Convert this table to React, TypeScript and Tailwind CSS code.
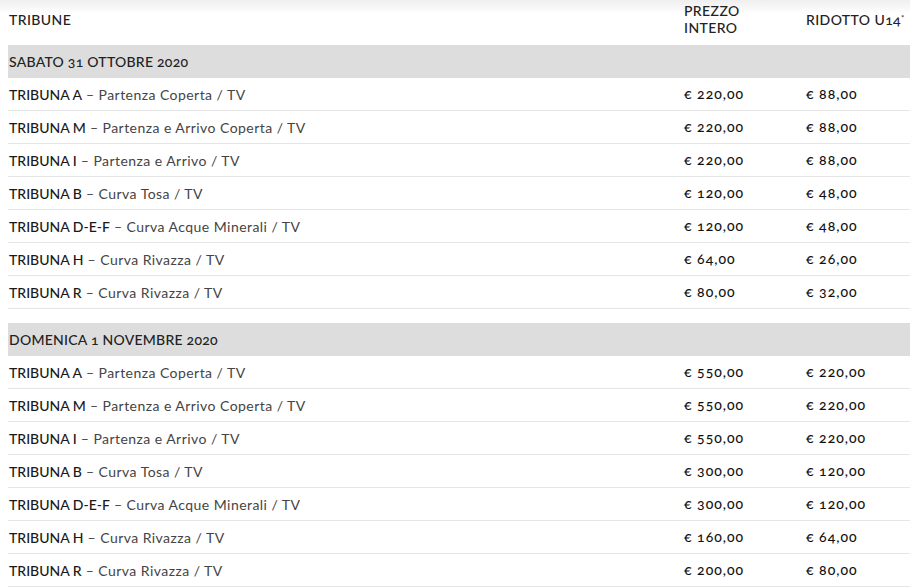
const sections = [
  {
    title: "SABATO 31 OTTOBRE 2020",
    rows: [
      ["TRIBUNA A", "Partenza Coperta / TV", "€ 220,00", "€ 88,00"],
      ["TRIBUNA M", "Partenza e Arrivo Coperta / TV", "€ 220,00", "€ 88,00"],
      ["TRIBUNA I", "Partenza e Arrivo / TV", "€ 220,00", "€ 88,00"],
      ["TRIBUNA B", "Curva Tosa / TV", "€ 120,00", "€ 48,00"],
      ["TRIBUNA D-E-F", "Curva Acque Minerali / TV", "€ 120,00", "€ 48,00"],
      ["TRIBUNA H", "Curva Rivazza / TV", "€ 64,00", "€ 26,00"],
      ["TRIBUNA R", "Curva Rivazza / TV", "€ 80,00", "€ 32,00"],
    ],
  },
  {
    title: "DOMENICA 1 NOVEMBRE 2020",
    rows: [
      ["TRIBUNA A", "Partenza Coperta / TV", "€ 550,00", "€ 220,00"],
      ["TRIBUNA M", "Partenza e Arrivo Coperta / TV", "€ 550,00", "€ 220,00"],
      ["TRIBUNA I", "Partenza e Arrivo / TV", "€ 550,00", "€ 220,00"],
      ["TRIBUNA B", "Curva Tosa / TV", "€ 300,00", "€ 120,00"],
      ["TRIBUNA D-E-F", "Curva Acque Minerali / TV", "€ 300,00", "€ 120,00"],
      ["TRIBUNA H", "Curva Rivazza / TV", "€ 160,00", "€ 64,00"],
      ["TRIBUNA R", "Curva Rivazza / TV", "€ 200,00", "€ 80,00"],
    ],
  },
];

const cols = "grid grid-cols-[676px_122px_1fr]";

export default function App() {
  return (
    <div className="h-[588px] w-[910px] overflow-hidden bg-white font-['Lato',sans-serif] text-[14px] text-[#222] oldstyle-nums">
      <div className="bg-gradient-to-b from-[#efefef] to-white to-[14px] pl-2">
        <div className={`${cols} h-[45px] items-center pb-[6px] font-medium tracking-[0.4px]`}>
          <div className="pl-px">TRIBUNE</div>
          <div className="self-start pt-[2px] leading-[17px]">
            PREZZO
            <br />
            INTERO
          </div>
          <div>
            RIDOTTO U14<sup className="text-[8px]">*</sup>
          </div>
        </div>
      </div>
      <div className="pl-2">
        {sections.map((s, i) => (
          <div key={s.title} className={i > 0 ? "mt-[14px]" : ""}>
            <div className="flex h-[33px] items-center bg-[#dddddd] pl-px font-medium tracking-[0.25px]">
              {s.title}
            </div>
            {s.rows.map((r) => (
              <div key={r[0] + r[2]} className={`${cols} h-[33px] items-center border-b border-[#e6e6e6]`}>
                <div className="pl-px">
                  <span className="font-medium text-[#1a1a1a]">{r[0]}</span>
                  <span className="font-normal tracking-[0.45px] text-[#444]"> – {r[1]}</span>
                </div>
                <div className="-mt-[2px] font-medium tracking-[1px] text-[#111]">{r[2]}</div>
                <div className="-mt-[2px] font-medium tracking-[1px] text-[#111]">{r[3]}</div>
              </div>
            ))}
          </div>
        ))}
      </div>
    </div>
  );
}
